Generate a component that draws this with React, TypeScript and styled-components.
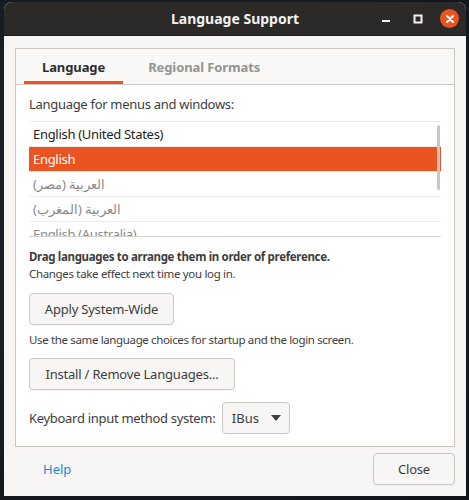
import React, { useState } from 'react';
import styled, { createGlobalStyle } from 'styled-components';

const GlobalStyle = createGlobalStyle`
  html, body {
    margin: 0;
    padding: 0;
    background: #161a20;
  }
  body {
    font-family: "Noto Sans", "Open Sans", sans-serif;
    font-size: 13px;
    color: #3d3d3d;
  }
`;

const Desktop = styled.div`
  width: 469px;
  height: 500px;
  padding: 2px 3px 4px 4px;
  box-sizing: border-box;
  background: radial-gradient(circle at 30% 40%, #1f242c 0%, #11141a 100%);
`;

const Window = styled.div`
  height: 100%;
  display: flex;
  flex-direction: column;
  border-radius: 8px 8px 0 0;
  overflow: hidden;
  background: #f6f5f4;
`;

const TitleBar = styled.div`
  height: 33px;
  flex: none;
  background: #2c2a29;
  border-bottom: 1px solid #1c1b1a;
  display: flex;
  align-items: center;
  justify-content: center;
  position: relative;
`;

const Title = styled.div`
  color: #f2f2f2;
  font-weight: 700;
  font-size: 14px;
`;

const Controls = styled.div`
  position: absolute;
  right: 7px;
  top: 0;
  height: 100%;
  display: flex;
  align-items: center;
  gap: 13px;
`;

const CtrlBtn = styled.div<{ $close?: boolean }>`
  width: 19px;
  height: 19px;
  border-radius: 50%;
  display: flex;
  align-items: center;
  justify-content: center;
  background: ${({ $close }) => ($close ? '#e95420' : 'transparent')};
`;

const Body = styled.div`
  flex: 1;
  display: flex;
  flex-direction: column;
  padding: 12px 11px 10px 11px;
`;

const Notebook = styled.div`
  border: 1px solid #cdc7c2;
  background: #ffffff;
  display: flex;
  flex-direction: column;
`;

const TabBar = styled.div`
  display: flex;
  gap: 7px;
  background: #f9f8f7;
  border-bottom: 1px solid #cdc7c2;
  padding: 0 8px;
  height: 35px;
`;

const Tab = styled.div<{ $active?: boolean }>`
  padding: 0 18px;
  display: flex;
  align-items: center;
  font-weight: 700;
  font-size: 13px;
  letter-spacing: -0.1px;
  color: ${({ $active }) => ($active ? '#2e2e2e' : '#929595')};
  box-shadow: ${({ $active }) => ($active ? 'inset 0 -3px 0 #e95420' : 'none')};
`;

const Content = styled.div`
  padding: 11px 13px 12px 13px;
  display: flex;
  flex-direction: column;
`;

const Text = styled.div<{ $bold?: boolean; $small?: boolean }>`
  font-size: ${({ $small }) => ($small ? '11.5px' : '13px')};
  letter-spacing: ${({ $small }) => ($small ? '-0.33px' : '-0.3px')};
  font-weight: ${({ $bold }) => ($bold ? 700 : 400)};
  color: #3d3d3d;
  line-height: 17px;
`;

const List = styled.div`
  margin-top: 8px;
  height: 114px;
  overflow: hidden;
  border-top: 1px solid #eeecea;
  border-bottom: 1px solid #d6d2cf;
  position: relative;
`;

const Row = styled.div<{ $selected?: boolean; $first?: boolean }>`
  height: 24px;
  padding: 0 4px;
  display: flex;
  align-items: center;
  border-bottom: 1px solid #efedeb;
  font-size: 13px;
  letter-spacing: -0.3px;
  background: ${({ $selected }) => ($selected ? '#e95420' : 'transparent')};
  color: ${({ $selected, $first }) => ($selected ? '#ffffff' : $first ? '#222222' : '#8a8a8a')};
`;

const ScrollThumb = styled.div`
  position: absolute;
  right: 1px;
  top: 3px;
  width: 3px;
  height: 65px;
  border-radius: 2px;
  background: #c9c6c3;
`;

const Notes = styled.div`
  margin-top: 11px;
  display: flex;
  flex-direction: column;
`;

const Button = styled.button<{ $width: number }>`
  width: ${({ $width }) => $width}px;
  height: 32px;
  border: 1px solid #cdc7c2;
  border-radius: 4px;
  background: #f7f6f5;
  font-family: inherit;
  font-size: 13px;
  letter-spacing: -0.2px;
  color: #3d3d3d;
  padding: 0;
  box-shadow: 0 1px 0 rgba(0, 0, 0, 0.03);
`;

const ButtonRow = styled.div<{ $top: number }>`
  display: flex;
  margin-top: ${({ $top }) => $top}px;
`;

const Hint = styled.div`
  margin-top: 6px;
  font-size: 11.5px;
  letter-spacing: -0.36px;
  color: #3d3d3d;
  line-height: 17px;
`;

const KeyboardRow = styled.div`
  margin-top: 12px;
  display: flex;
  align-items: center;
  gap: 7px;
`;

const Combo = styled.div`
  width: 68px;
  height: 32px;
  box-sizing: border-box;
  border: 1px solid #cdc7c2;
  border-radius: 4px;
  background: #f7f6f5;
  display: flex;
  align-items: center;
  justify-content: center;
  gap: 12px;
  font-size: 13px;
  color: #3d3d3d;
`;

const Footer = styled.div`
  margin-top: 6px;
  display: flex;
  align-items: center;
  justify-content: space-between;
`;

const HelpLink = styled.span`
  color: #1c8ad4;
  font-size: 13px;
  margin-left: 28px;
`;

const languages = [
  'English (United States)',
  'English',
  'العربية (مصر)',
  'العربية (المغرب)',
  'English (Australia)',
];

export default function App() {
  const [selected] = useState(1);

  return (
    <>
      <GlobalStyle />
      <Desktop>
        <Window>
          <TitleBar>
            <Title>Language Support</Title>
            <Controls>
              <CtrlBtn>
                <svg width="10" height="10" viewBox="0 0 10 10">
                  <rect x="1" y="6" width="8" height="2" fill="#f2f2f2" />
                </svg>
              </CtrlBtn>
              <CtrlBtn>
                <svg width="10" height="10" viewBox="0 0 10 10">
                  <rect x="1.5" y="1.5" width="7" height="7" fill="none" stroke="#f2f2f2" strokeWidth="2" />
                </svg>
              </CtrlBtn>
              <CtrlBtn $close>
                <svg width="10" height="10" viewBox="0 0 10 10">
                  <path d="M2 2 L8 8 M8 2 L2 8" stroke="#ffffff" strokeWidth="2" strokeLinecap="round" />
                </svg>
              </CtrlBtn>
            </Controls>
          </TitleBar>
          <Body>
            <Notebook>
              <TabBar>
                <Tab $active>Language</Tab>
                <Tab>Regional Formats</Tab>
              </TabBar>
              <Content>
                <Text>Language for menus and windows:</Text>
                <List>
                  {languages.map((l, i) => (
                    <Row key={l} $selected={i === selected} $first={i === 0}>
                      {l}
                    </Row>
                  ))}
                  <ScrollThumb />
                </List>
                <Notes>
                  <Text $bold $small>Drag languages to arrange them in order of preference.</Text>
                  <Text $small>Changes take effect next time you log in.</Text>
                </Notes>
                <ButtonRow $top={11}>
                  <Button $width={145}>Apply System-Wide</Button>
                </ButtonRow>
                <Hint>Use the same language choices for startup and the login screen.</Hint>
                <ButtonRow $top={10}>
                  <Button $width={206}>Install / Remove Languages...</Button>
                </ButtonRow>
                <KeyboardRow>
                  <Text>Keyboard input method system:</Text>
                  <Combo>
                    IBus
                    <svg width="10" height="6" viewBox="0 0 10 6">
                      <path d="M0 0 L10 0 L5 6 Z" fill="#3d3d3d" />
                    </svg>
                  </Combo>
                </KeyboardRow>
              </Content>
            </Notebook>
            <Footer>
              <HelpLink>Help</HelpLink>
              <Button $width={82}>Close</Button>
            </Footer>
          </Body>
        </Window>
      </Desktop>
    </>
  );
}
